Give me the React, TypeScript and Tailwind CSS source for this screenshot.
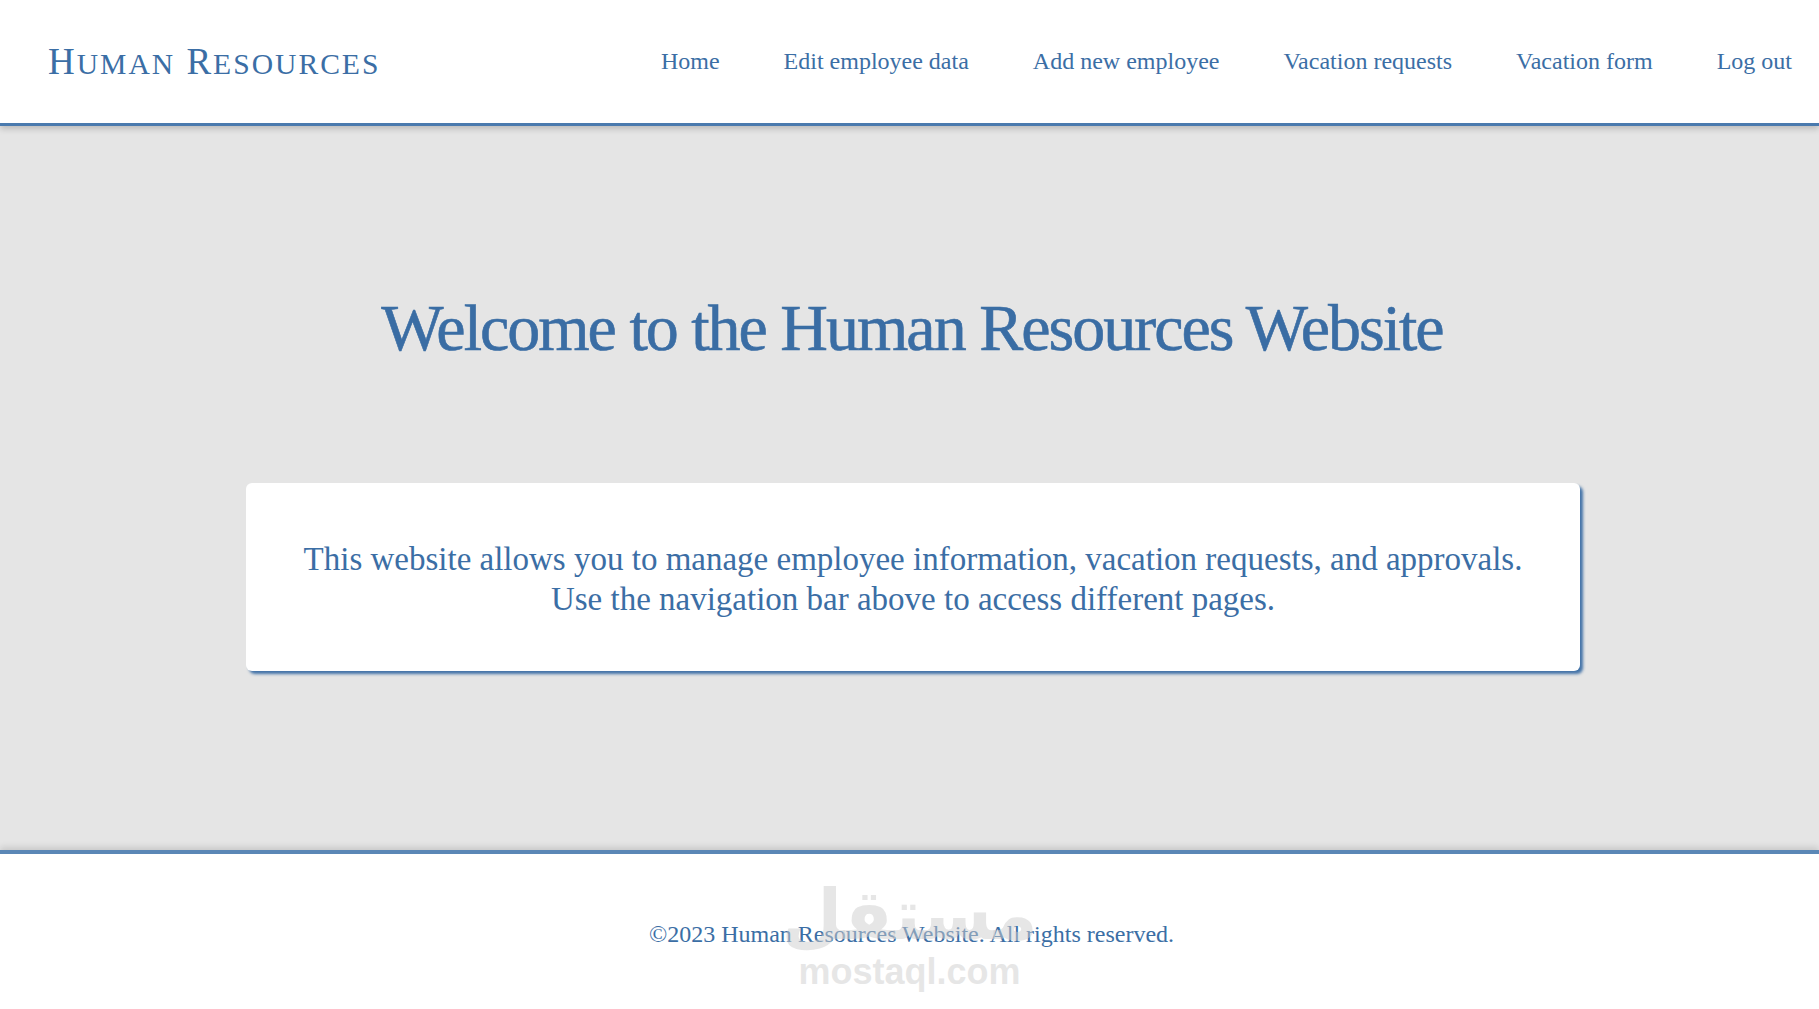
import React from "react";

const navLinks = [
  "Home",
  "Edit employee data",
  "Add new employee",
  "Vacation requests",
  "Vacation form",
  "Log out",
];

const serif = "font-['Liberation_Serif',Georgia,serif]";

function Logo() {
  // Trajan-style small caps: full caps for initials, reduced caps for the rest
  return (
    <h1 className={`${serif} text-[37px] uppercase leading-none tracking-[2px] text-[#3b6ea5]`}>
      H<span className="text-[0.8em]">uman</span> R<span className="text-[0.8em]">esources</span>
    </h1>
  );
}

function Header() {
  return (
    <header className="relative z-10 flex h-[126px] items-center justify-between border-b-[3px] border-[#4a7aae] bg-white pl-[48px] pr-[27px] shadow-[0_3px_6px_rgba(0,0,0,0.18)]">
      <Logo />
      <nav className="flex items-center gap-[64px] pb-[2px]">
        {navLinks.map((link) => (
          <a key={link} href="#" className={`${serif} text-[24px] text-[#3b6ea5]`}>
            {link}
          </a>
        ))}
      </nav>
    </header>
  );
}

function Footer() {
  return (
    <footer className="relative flex h-[159px] items-center justify-center border-t-[4px] border-[#5b87b6] bg-white pl-[4px] pt-[4px] shadow-[0_-3px_6px_rgba(0,0,0,0.12)]">
      <p className={`${serif} text-[24px] text-[#3b6ea5]`}>
        ©2023 Human Resources Website. All rights reserved.
      </p>
      {/* site watermark */}
      <div className="pointer-events-none absolute left-1/2 top-[20px] flex -translate-x-1/2 flex-col items-center text-[rgba(205,205,205,0.5)]">
        <span className="font-['DejaVu_Sans',sans-serif] text-[70px] font-bold leading-[82px]">مستقل</span>
        <span className="font-['Liberation_Sans',Arial,sans-serif] text-[36px] font-bold leading-[32px]">mostaql.com</span>
      </div>
    </footer>
  );
}

export default function App() {
  return (
    <div className="flex min-h-screen flex-col bg-[#e5e5e5]">
      <Header />
      <main className="flex flex-1 flex-col items-center pt-[162px]">
        <h2 className={`${serif} ml-[5px] text-[66px] leading-[80px] tracking-[-2px] text-[#3a6da4] [-webkit-text-stroke:0.6px_#3a6da4]`}>
          Welcome to the Human Resources Website
        </h2>
        <div className="ml-[7px] mt-[115px] w-[1334px] rounded-[6px] bg-white pb-[52px] pt-[56px] text-center shadow-[3px_3px_3px_rgba(58,109,164,0.95)]">
          <p className={`${serif} text-[33px] leading-[40px] text-[#3b6ea5]`}>
            This website allows you to manage employee information, vacation requests, and approvals.
            <br />
            Use the navigation bar above to access different pages.
          </p>
        </div>
      </main>
      <Footer />
    </div>
  );
}
